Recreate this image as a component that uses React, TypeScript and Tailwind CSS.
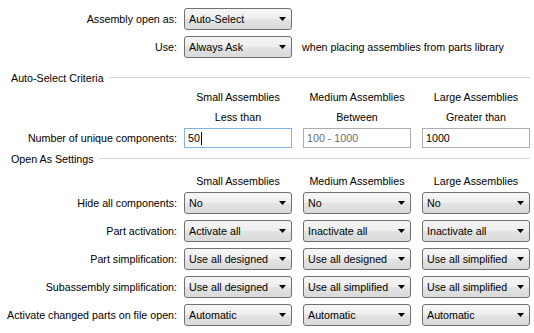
import React from "react";

function Arrow() {
  return (
    <svg width="7" height="4" viewBox="0 0 7 4" className="shrink-0">
      <path d="M0 0H7L3.5 4Z" fill="#000" />
    </svg>
  );
}

function Combo({ value }: { value: string }) {
  return (
    <div className="w-[108px] h-[22px] shrink-0 flex items-center justify-between pl-[4px] pr-[5px] border border-[#707070] rounded-[3px] bg-[linear-gradient(to_bottom,#f6f6f6_0%,#eeeeee_50%,#e4e4e4_50%,#d9d9d9_100%)]">
      <span className="whitespace-nowrap">{value}</span>
      <Arrow />
    </div>
  );
}

function TextBox({
  value,
  variant,
}: {
  value: string;
  variant: "focus" | "disabled" | "normal";
}) {
  const cls =
    variant === "focus"
      ? "border-[#7eb4ea] bg-white text-black"
      : variant === "disabled"
      ? "border-[#abadb3] bg-white text-[#6d6d6d]"
      : "border-[#abadb3] bg-white text-black";
  return (
    <div
      className={
        "w-[108px] h-[20px] shrink-0 flex items-center pl-[3px] border " + cls
      }
    >
      <span className="whitespace-nowrap">{value}</span>
      {variant === "focus" && <span className="ml-px w-px h-[13px] bg-black" />}
    </div>
  );
}

function Label({ text }: { text: string }) {
  return (
    <div className="w-[184px] shrink-0 pr-[7px] text-right whitespace-nowrap">
      {text}
    </div>
  );
}

function Section({ title }: { title: string }) {
  return (
    <div className="flex items-center h-[14px] pl-[11px] pr-[4px]">
      <span className="whitespace-nowrap">{title}</span>
      <div className="ml-[5px] flex-1 h-[2px] border-t border-[#d5d5d5] border-b-white" />
    </div>
  );
}

function HeaderRow({ items }: { items: string[] }) {
  return (
    <div className="flex h-[14px] items-center">
      <div className="w-[184px] shrink-0" />
      <div className="flex gap-[11px]">
        {items.map((t) => (
          <div key={t} className="w-[108px] text-center whitespace-nowrap">
            {t}
          </div>
        ))}
      </div>
    </div>
  );
}

const rows: { label: string; values: string[] }[] = [
  { label: "Hide all components:", values: ["No", "No", "No"] },
  {
    label: "Part activation:",
    values: ["Activate all", "Inactivate all", "Inactivate all"],
  },
  {
    label: "Part simplification:",
    values: ["Use all designed", "Use all designed", "Use all simplified"],
  },
  {
    label: "Subassembly simplification:",
    values: ["Use all designed", "Use all simplified", "Use all simplified"],
  },
  {
    label: "Activate changed parts on file open:",
    values: ["Automatic", "Automatic", "Automatic"],
  },
];

export default function App() {
  return (
    <div className="w-[534px] h-[333px] overflow-hidden bg-white text-black text-[10.7px] leading-[14px] font-['Liberation_Sans',Arial,sans-serif]">
      <div className="pt-[8px] flex flex-col">
        <div className="flex items-center">
          <Label text="Assembly open as:" />
          <Combo value="Auto-Select" />
        </div>
        <div className="flex items-center mt-[6px]">
          <Label text="Use:" />
          <Combo value="Always Ask" />
          <span className="ml-[10px] whitespace-nowrap">
            when placing assemblies from parts library
          </span>
        </div>
        <div className="mt-[13px]">
          <Section title="Auto-Select Criteria" />
        </div>
        <div className="mt-[5px]">
          <HeaderRow
            items={["Small Assemblies", "Medium Assemblies", "Large Assemblies"]}
          />
        </div>
        <div className="mt-[6px]">
          <HeaderRow items={["Less than", "Between", "Greater than"]} />
        </div>
        <div className="flex items-center mt-[4px]">
          <Label text="Number of unique components:" />
          <div className="flex gap-[11px]">
            <TextBox value="50" variant="focus" />
            <TextBox value="100 - 1000" variant="disabled" />
            <TextBox value="1000" variant="normal" />
          </div>
        </div>
        <div className="mt-[4px]">
          <Section title="Open As Settings" />
        </div>
        <div className="mt-[8px]">
          <HeaderRow
            items={["Small Assemblies", "Medium Assemblies", "Large Assemblies"]}
          />
        </div>
        <div className="flex flex-col gap-[6px] mt-[4px]">
          {rows.map((r) => (
            <div key={r.label} className="flex items-center">
              <Label text={r.label} />
              <div className="flex gap-[11px]">
                {r.values.map((v, i) => (
                  <Combo key={i} value={v} />
                ))}
              </div>
            </div>
          ))}
        </div>
      </div>
    </div>
  );
}
